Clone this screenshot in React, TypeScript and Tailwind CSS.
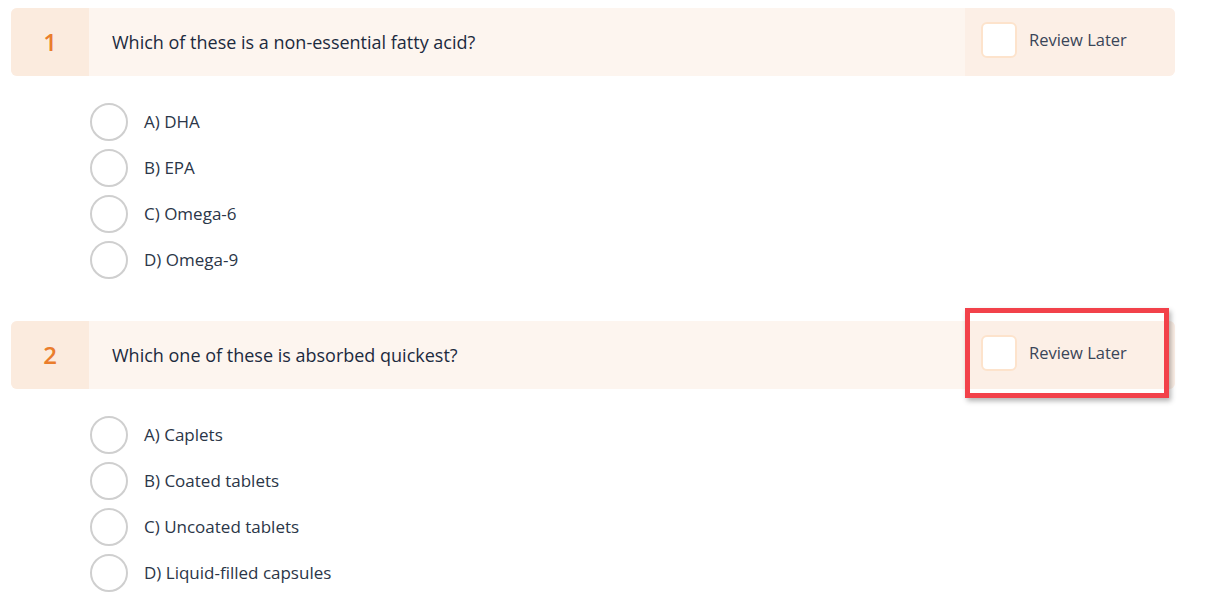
const questions = [
  {
    n: 1,
    text: 'Which of these is a non-essential fatty acid?',
    options: ['A) DHA', 'B) EPA', 'C) Omega-6', 'D) Omega-9'],
    highlight: false,
  },
  {
    n: 2,
    text: 'Which one of these is absorbed quickest?',
    options: ['A) Caplets', 'B) Coated tablets', 'C) Uncoated tablets', 'D) Liquid-filled capsules'],
    highlight: true,
  },
];

const Question = ({ n, text, options, highlight }: (typeof questions)[number]) => (
  <div className="w-[1164px]">
    <div className="relative flex h-[68px] rounded-md bg-[#fdf5ef]">
      <div className="flex w-[78px] items-center justify-center rounded-l-md bg-[#fbebde] text-[24px] font-semibold text-[#ea7d2c]">
        {n}
      </div>
      <div className="flex flex-1 items-center pl-[23px] text-[18px] text-[#1c2a3e]">{text}</div>
      <div className="flex w-[210px] items-center gap-3 rounded-r-md bg-[#fcefe6] pb-1 pl-4">
        <div className="h-9 w-9 rounded-md border-2 border-[#fde3cc] bg-white" />
        <span className="text-[16.5px] text-[#3a4558]">Review Later</span>
      </div>
      {highlight && (
        <div className="absolute left-[954px] top-[-13px] h-[90px] w-[204px] border-[5px] border-[#f2414a] shadow-[2px_3px_5px_rgba(0,0,0,0.3)]" />
      )}
    </div>
    <div className="flex flex-col gap-2 pl-[79px] pt-[27px]">
      {options.map((o) => (
        <label key={o} className="flex items-center gap-4">
          <span className="h-[38px] w-[38px] rounded-full border-2 border-[#cfcfcf] bg-white" />
          <span className="text-[17px] text-[#2b3648]">{o}</span>
        </label>
      ))}
    </div>
  </div>
);

export default function App() {
  return (
    <div className="flex min-h-[616px] flex-col gap-[42px] bg-white pl-[11px] pt-2 font-['Open_Sans',sans-serif]">
      {questions.map((q) => (
        <Question key={q.n} {...q} />
      ))}
    </div>
  );
}
